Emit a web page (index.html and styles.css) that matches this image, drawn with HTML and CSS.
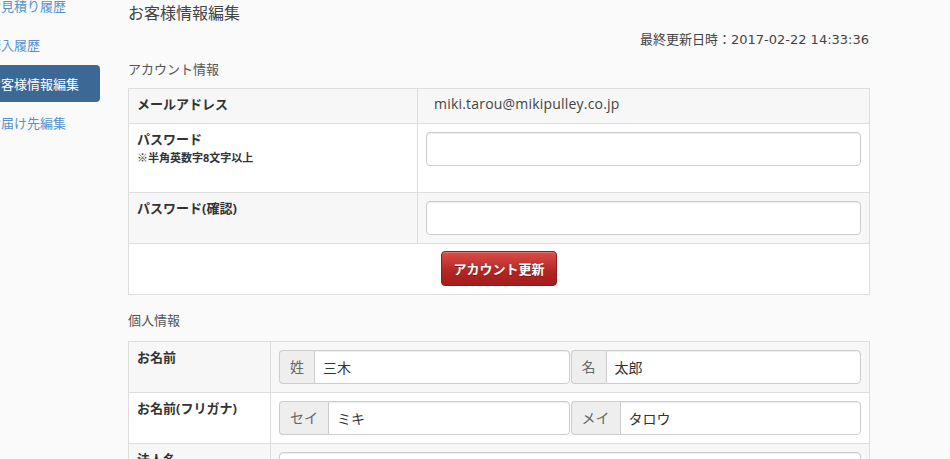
FILE: index.html
```html
<!DOCTYPE html>
<html lang="ja">
<head>
<meta charset="utf-8">
<title>お客様情報編集</title>
<link rel="stylesheet" href="styles.css">
</head>
<body>
<div class="page">
  <nav class="sidebar">
    <a class="nav-item" href="#">お見積り履歴</a>
    <a class="nav-item" href="#">購入履歴</a>
    <a class="nav-item active" href="#">お客様情報編集</a>
    <a class="nav-item" href="#">お届け先編集</a>
  </nav>
  <main class="main">
    <h1 class="title">お客様情報編集</h1>
    <p class="updated">最終更新日時：2017-02-22 14:33:36</p>

    <h2 class="section">アカウント情報</h2>
    <table class="form-table account">
      <tr class="striped row-short">
        <th>メールアドレス</th>
        <td class="email">miki.tarou@mikipulley.co.jp</td>
      </tr>
      <tr class="row-tall">
        <th>パスワード<span class="note">※半角英数字8文字以上</span></th>
        <td class="input-cell"><input class="field" type="password"></td>
      </tr>
      <tr class="striped">
        <th>パスワード(確認)</th>
        <td class="input-cell"><input class="field" type="password"></td>
      </tr>
      <tr>
        <td class="actions" colspan="2"><div class="actions-inner"><button class="btn-red" type="button">アカウント更新</button></div></td>
      </tr>
    </table>

    <h2 class="section section-second">個人情報</h2>
    <table class="form-table personal">
      <tr class="striped">
        <th>お名前</th>
        <td class="input-cell">
          <div class="pair">
            <div class="group"><span class="addon">姓</span><input class="field flat" type="text" value="三木"></div>
            <div class="group"><span class="addon">名</span><input class="field flat" type="text" value="太郎"></div>
          </div>
        </td>
      </tr>
      <tr>
        <th>お名前(フリガナ)</th>
        <td class="input-cell">
          <div class="pair">
            <div class="group"><span class="addon">セイ</span><input class="field flat" type="text" value="ミキ"></div>
            <div class="group"><span class="addon">メイ</span><input class="field flat" type="text" value="タロウ"></div>
          </div>
        </td>
      </tr>
      <tr class="striped">
        <th>法人名</th>
        <td class="input-cell"><input class="field" type="text"></td>
      </tr>
    </table>
  </main>
</div>
</body>
</html>
```

FILE: styles.css
```css
* { box-sizing: border-box; }

html, body {
  margin: 0;
  height: 100%;
  overflow: hidden;
}

body {
  background: #fafafa;
  color: #333;
  font-family: "Open Sans", "Noto Sans CJK JP", sans-serif;
  font-size: 13px;
  line-height: 18px;
}

.page {
  display: flex;
  gap: 28px;
}

.sidebar {
  display: flex;
  flex-direction: column;
  gap: 2px;
  width: 127px;
  flex: 0 0 127px;
  margin-left: -27px;
  margin-top: -13px;
}

.nav-item {
  display: block;
  height: 37px;
  padding: 10px 15px 9px;
  border-radius: 4px;
  color: #5592cd;
  text-decoration: none;
  font-size: 13px;
  line-height: 18px;
  white-space: nowrap;
}

.nav-item.active {
  background: #3c6895;
  color: #fff;
}

.main {
  width: 742px;
  flex: 0 0 742px;
}

.title {
  margin: 2px 0 0;
  font-size: 16px;
  font-weight: normal;
  line-height: 22px;
  color: #444;
}

.updated {
  margin: 7px 0 0;
  text-align: right;
  line-height: 18px;
  color: #444;
  font-family: "DejaVu Sans", "Noto Sans CJK JP", sans-serif;
  padding-right: 1px;
}

.section {
  margin: 11px 0 10px;
  font-size: 13px;
  font-weight: normal;
  line-height: 18px;
  color: #555;
}

.section-second {
  margin: 16px 0 12px;
}

.form-table {
  width: 742px;
  border-collapse: collapse;
  background: #fff;
  border: 1px solid #ddd;
}

.form-table th,
.form-table td {
  border: 1px solid #ddd;
  padding: 8px;
  vertical-align: top;
  text-align: left;
}

.form-table th,
.form-table .email {
  padding-top: 6px;
  padding-bottom: 10px;
}

.form-table th {
  font-weight: bold;
  color: #333;
}

.account th { width: 289px; }
.personal th { width: 142px; }

.striped th,
.striped td {
  background: #f7f7f7;
}

.row-short th,
.row-short td { height: 34px; }

.row-tall td { height: 69px; }

.note {
  display: block;
  font-size: 11px;
  line-height: 16px;
  margin-top: 2px;
}

.email {
  font-size: 14px;
  letter-spacing: 0.2px;
  padding-left: 16px !important;
  color: #444;
}

.field {
  display: block;
  width: 100%;
  height: 34px;
  padding: 6px 8px;
  border: 1px solid #ccc;
  border-radius: 4px;
  background: #fff;
  font-family: inherit;
  font-size: 14px;
  color: #333;
  box-shadow: inset 0 1px 1px rgba(0,0,0,0.075);
}

.form-table .actions {
  padding: 7px 8px 8px;
}

.actions-inner {
  display: flex;
  justify-content: center;
}

.btn-red {
  display: block;
  height: 35px;
  padding: 0 11px;
  border: 1px solid #8e1b1b;
  border-radius: 4px;
  background: linear-gradient(#db4d47, #b32523 60%, #a31d1d);
  color: #fff;
  font-family: inherit;
  font-size: 13px;
  font-weight: bold;
  text-shadow: 0 1px 1px rgba(0,0,0,0.35);
  box-shadow: inset 0 1px 0 rgba(255,255,255,0.25);
  cursor: pointer;
}

.pair {
  display: flex;
  gap: 1px;
}

.group {
  display: flex;
  flex: 1 1 0;
  height: 34px;
}

.addon {
  display: flex;
  align-items: center;
  padding: 0 10px;
  background: #eee;
  border: 1px solid #ccc;
  border-right: 0;
  border-radius: 4px 0 0 4px;
  color: #666;
  font-size: 14px;
  white-space: nowrap;
}

.field.flat {
  flex: 1 1 auto;
  width: auto;
  min-width: 0;
  height: 34px;
  border-radius: 0 4px 4px 0;
}
```
